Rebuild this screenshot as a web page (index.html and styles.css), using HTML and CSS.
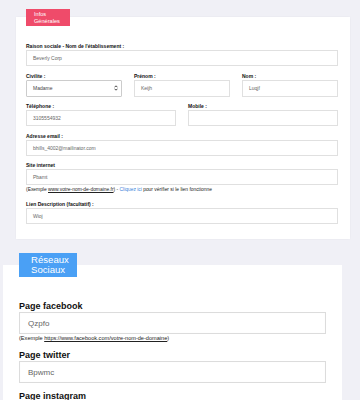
FILE: index.html
```html
<!DOCTYPE html>
<html lang="fr">
<head>
<meta charset="utf-8">
<link rel="stylesheet" href="styles.css">
</head>
<body>
<div class="page">
  <section class="sec sec-infos">
    <div class="card card-infos">
      <div class="tab tab-pink">Infos<br>Générales</div>
      <div class="field">
        <div class="lbl">Raison sociale - Nom de l'établissement :</div>
        <div class="inp">Beverly Corp</div>
      </div>
      <div class="grid3">
        <div class="field">
          <div class="lbl">Civilite :</div>
          <div class="inp sel">
            <span>Madame</span>
            <svg class="chev" width="4" height="6" viewBox="0 0 4 6"><path d="M0.5 2.3 L2 0.8 L3.5 2.3 M0.5 3.7 L2 5.2 L3.5 3.7" fill="none" stroke="#333" stroke-width="0.9"/></svg>
          </div>
        </div>
        <div class="field">
          <div class="lbl">Prénom :</div>
          <div class="inp">Keijh</div>
        </div>
        <div class="field">
          <div class="lbl">Nom :</div>
          <div class="inp">Luqjf</div>
        </div>
      </div>
      <div class="grid2">
        <div class="field">
          <div class="lbl">Téléphone :</div>
          <div class="inp">3105554932</div>
        </div>
        <div class="field">
          <div class="lbl">Mobile :</div>
          <div class="inp"></div>
        </div>
      </div>
      <div class="field">
        <div class="lbl">Adresse email :</div>
        <div class="inp">bhills_4002@mailinator.com</div>
      </div>
      <div class="field">
        <div class="lbl">Site internet</div>
        <div class="inp">Pbamt</div>
        <div class="help">(Exemple <a class="ul">www.votre-nom-de-domaine.fr</a>) - <a class="blue">Cliquez ici</a> pour vérifier si le lien fonctionne</div>
      </div>
      <div class="field last">
        <div class="lbl">Lien Description (facultatif) :</div>
        <div class="inp">Wioj</div>
      </div>
    </div>
  </section>
  <section class="sec sec-social">
    <div class="card card-social">
      <div class="tab tab-blue">Réseaux<br>Sociaux</div>
      <div class="field2">
        <div class="lbl2">Page facebook</div>
        <div class="inp2">Qzpfo</div>
        <div class="help2">(Exemple <a class="ul">https://www.facebook.com/votre-nom-de-domaine</a>)</div>
      </div>
      <div class="field2">
        <div class="lbl2">Page twitter</div>
        <div class="inp2">Bpwmc</div>
      </div>
      <div class="field2">
        <div class="lbl2">Page instagram</div>
        <div class="inp2">Xyzab</div>
      </div>
    </div>
  </section>
</div>
</body>
</html>
```
FILE: styles.css
```css
* { box-sizing: border-box; }
html, body { margin: 0; padding: 0; }
body {
  background: #f0f0f6;
  font-family: "Liberation Sans", Arial, sans-serif;
  color: #222;
  width: 360px;
  height: 400px;
  overflow: hidden;
}
.page { width: 360px; }
.sec-infos { padding: 17px 10px 0 16px; }
.card { background: #fff; position: relative; }
.card-infos {
  width: 334px;
  padding: 26px 12px 15px 10px;
  box-shadow: 0 0 2px rgba(0,0,0,0.05);
}
.tab {
  position: absolute;
  color: #fff;
}
.tab-pink {
  background: #ef4b6a;
  left: 10px;
  top: -8px;
  width: 44px;
  height: 17px;
  font-size: 5.6px;
  line-height: 6.6px;
  padding: 2px 0 0 8px;
}
.field { margin-bottom: 6.5px; }
.field.last { margin-bottom: 0; }
.lbl {
  font-size: 5px;
  font-weight: bold;
  line-height: 7px;
  height: 7px;
  color: #111;
  white-space: nowrap;
}
.inp {
  height: 16px;
  border: 1px solid #e0e0e0;
  font-size: 5px;
  color: #666;
  padding-left: 6px;
  display: flex;
  align-items: center;
  background: #fff;
}
.sel {
  justify-content: space-between;
  padding-right: 3px;
  border-color: #ccc;
  border-radius: 1px;
  color: #444;
}
.chev { display: block; }
.grid3 {
  display: grid;
  grid-template-columns: 96px 96px 96px;
  column-gap: 12px;
}
.grid3 .inp { height: 17px; }
.grid2 {
  display: grid;
  grid-template-columns: 150px 150px;
  column-gap: 12px;
}
.help {
  font-size: 4.9px;
  line-height: 6px;
  margin-top: 2px;
  color: #222;
  white-space: nowrap;
  margin-bottom: 8px;
}
.help .ul { text-decoration: underline; color: #222; }
.help .blue { color: #3b7fd9; }

.sec-social { padding: 26px 18px 0 3px; }
.card-social {
  width: 339px;
  height: 200px;
  padding: 35px 16px 0 16px;
}
.tab-blue {
  background: #4aa0f5;
  left: 16px;
  top: -12px;
  width: 58px;
  height: 24px;
  font-size: 9.6px;
  line-height: 10px;
  padding: 2px 0 0 12px;
}
.field2 { margin-bottom: 7px; }
.lbl2 {
  font-size: 9px;
  font-weight: bold;
  line-height: 12px;
  color: #111;
}
.inp2 {
  height: 22px;
  border: 1px solid #dcdcdc;
  font-size: 8px;
  color: #666;
  padding-left: 8px;
  display: flex;
  align-items: center;
  box-shadow: inset 0 0 1px rgba(0,0,0,0.05);
}
.help2 {
  font-size: 5.6px;
  line-height: 7px;
  margin-top: 1px;
  color: #222;
  white-space: nowrap;
}
.help2 .ul { text-decoration: underline; }
```
